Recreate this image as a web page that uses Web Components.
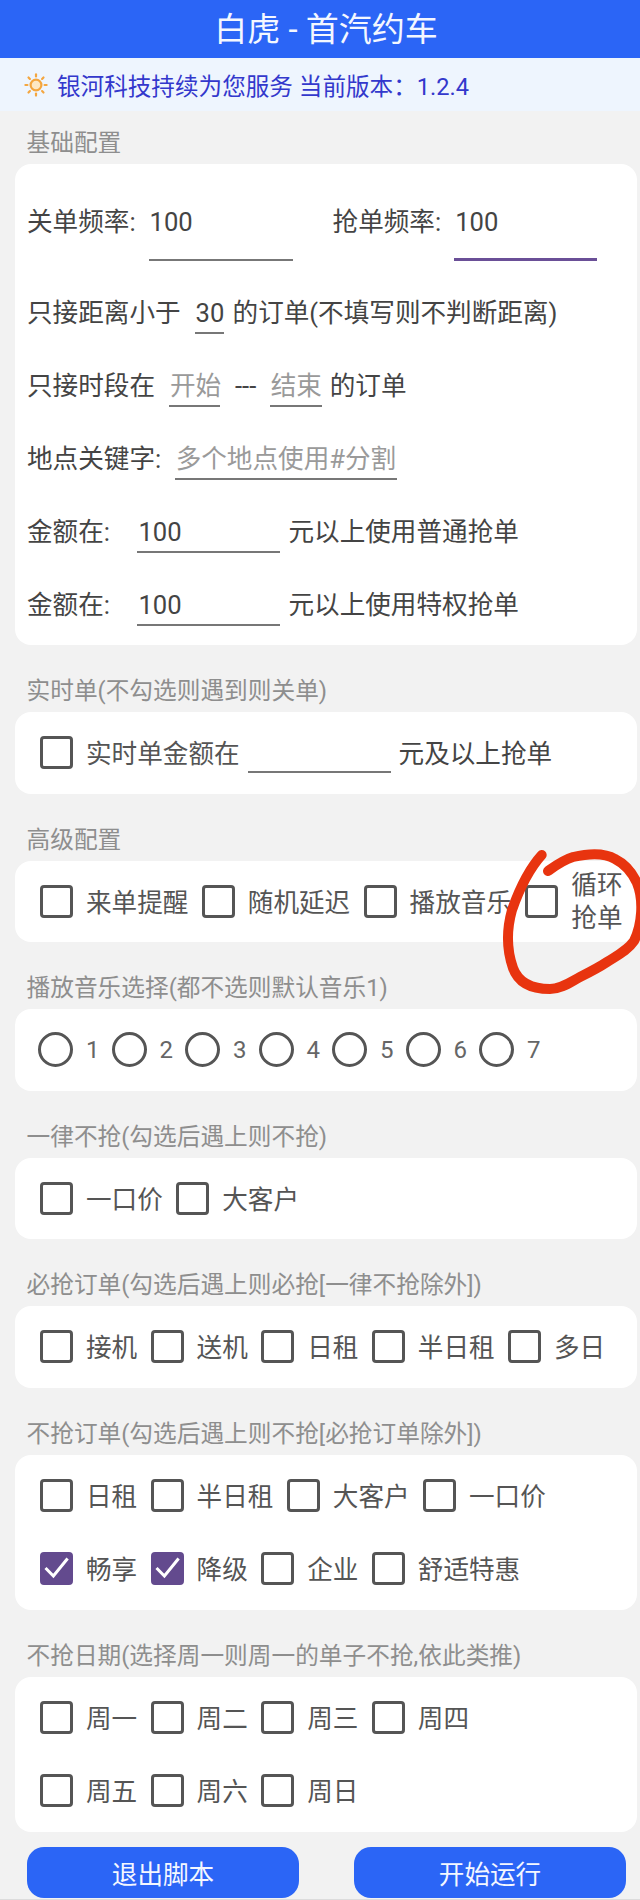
<!DOCTYPE html>
<html lang="zh">
<head>
<meta charset="utf-8">
<title>白虎 - 首汽约车</title>
<style>
    html, body {
        margin: 0;
        padding: 0;
    }

    body {
        position: relative;
        width: 640px;
        height: 1900px;
        overflow: hidden;
        background: #f2f2f2;
        box-shadow: inset 0 -1px #dcdcdc;
        color: #444;
        font-family: Roboto, "Noto Sans CJK SC", sans-serif;
        font-size: 25.6px;
    }
</style>
</head>
<body>
<app-header>白虎 - 首汽约车</app-header>
<app-notice>银河科技持续为您服务 当前版本：1.2.4</app-notice>

<config-section label="基础配置" first>
    <form-card class="form">
        <form-row tall>
            关单频率:
            <text-field w="144" ml="13" value="100" tall></text-field>
            <span style="margin-left:40px">抢单频率:</span>
            <text-field w="143" ml="13" value="100" tall active></text-field>
        </form-row>
        <form-row>
            只接距离小于
            <text-field w="29" ml="14" value="30"></text-field>
            <span style="margin-left:9px">的订单(不填写则不判断距离)</span>
        </form-row>
        <form-row>
            只接时段在
            <text-field w="51" ml="14" hint="开始"></text-field>
            <span style="margin-left:15px">---</span>
            <text-field w="52" ml="13.5" hint="结束"></text-field>
            <span style="margin-left:8px">的订单</span>
        </form-row>
        <form-row>
            地点关键字:
            <text-field w="222" ml="13.5" hint="多个地点使用#分割"></text-field>
        </form-row>
        <form-row>
            金额在:
            <text-field w="143" ml="27.5" value="100"></text-field>
            <span style="margin-left:8px">元以上使用普通抢单</span>
        </form-row>
        <form-row>
            金额在:
            <text-field w="143" ml="27.5" value="100"></text-field>
            <span style="margin-left:8px">元以上使用特权抢单</span>
        </form-row>
    </form-card>
</config-section>

<config-section label="实时单(不勾选则遇到则关单)">
    <form-card>
        <option-row>
            <check-box>实时单金额在</check-box>
            <text-field w="143" ml="-5.2"></text-field>
            <span style="margin-left:-5.6px;padding-bottom:2px">元及以上抢单</span>
        </option-row>
    </form-card>
</config-section>

<config-section label="高级配置">
    <form-card>
        <option-row>
            <check-box>来单提醒</check-box>
            <check-box>随机延迟</check-box>
            <check-box>播放音乐</check-box>
            <check-box wrap>循环抢单</check-box>
        </option-row>
    </form-card>
</config-section>

<config-section label="播放音乐选择(都不选则默认音乐1)">
    <form-card>
        <option-row radios>
            <radio-box>1</radio-box>
            <radio-box>2</radio-box>
            <radio-box>3</radio-box>
            <radio-box>4</radio-box>
            <radio-box>5</radio-box>
            <radio-box>6</radio-box>
            <radio-box>7</radio-box>
        </option-row>
    </form-card>
</config-section>

<config-section label="一律不抢(勾选后遇上则不抢)">
    <form-card>
        <option-row>
            <check-box>一口价</check-box>
            <check-box>大客户</check-box>
        </option-row>
    </form-card>
</config-section>

<config-section label="必抢订单(勾选后遇上则必抢[一律不抢除外])">
    <form-card>
        <option-row>
            <check-box>接机</check-box>
            <check-box>送机</check-box>
            <check-box>日租</check-box>
            <check-box>半日租</check-box>
            <check-box>多日</check-box>
        </option-row>
    </form-card>
</config-section>

<config-section label="不抢订单(勾选后遇上则不抢[必抢订单除外])">
    <form-card>
        <option-row>
            <check-box>日租</check-box>
            <check-box>半日租</check-box>
            <check-box>大客户</check-box>
            <check-box>一口价</check-box>
        </option-row>
        <option-row>
            <check-box checked>畅享</check-box>
            <check-box checked>降级</check-box>
            <check-box>企业</check-box>
            <check-box>舒适特惠</check-box>
        </option-row>
    </form-card>
</config-section>

<config-section label="不抢日期(选择周一则周一的单子不抢,依此类推)">
    <form-card>
        <option-row>
            <check-box>周一</check-box>
            <check-box>周二</check-box>
            <check-box>周三</check-box>
            <check-box>周四</check-box>
        </option-row>
        <option-row>
            <check-box>周五</check-box>
            <check-box>周六</check-box>
            <check-box>周日</check-box>
        </option-row>
    </form-card>
</config-section>

<action-bar>
    <action-button>退出脚本</action-button>
    <action-button>开始运行</action-button>
</action-bar>

<pen-circle></pen-circle>

<script>
// small helper, every element here is just a style block plus some markup
function shadow(el, html) {
    el.attachShadow({ mode: 'open' }).innerHTML = html;
}

class AppHeader extends HTMLElement {
    connectedCallback() {
        shadow(this, `
            <style>
                :host {
                    display: flex;
                    align-items: center;
                    justify-content: center;
                    height: 58px;
                    padding: 0 0 5px 12px;
                    box-sizing: border-box;
                    background: #2b65f6;
                    color: #f4f7ff;
                    font-size: 33px;
                }
            </style>
            <slot></slot>
        `);
    }
}

class AppNotice extends HTMLElement {
    connectedCallback() {
        const rays = [0, 45, 90, 135, 180, 225, 270, 315]
            .map((a) => `<line x1="12" y1="1.4" x2="12" y2="3.4" transform="rotate(${a} 12 12)"/>`)
            .join('');
        shadow(this, `
            <style>
                :host {
                    display: flex;
                    align-items: center;
                    height: 53px;
                    padding-left: 24px;
                    box-sizing: border-box;
                    background: #eef5fe;
                    color: #3338cc;
                    font-size: 23.6px;
                }

                svg {
                    width: 24px;
                    height: 24px;
                    margin-right: 9px;
                    flex: none;
                }
            </style>
            <svg viewBox="0 0 24 24" fill="#fde8c4" stroke="#f4a63f" stroke-width="2.2" stroke-linecap="round">
                <circle cx="12" cy="12" r="5.4"/>
                ${rays}
            </svg>
            <span><slot></slot></span>
        `);
    }
}

class ConfigSection extends HTMLElement {
    connectedCallback() {
        const top = this.hasAttribute('first') ? 11 : 25;
        shadow(this, `
            <style>
                :host {
                    display: block;
                    padding-top: ${top}px;
                }

                .label {
                    height: 42px;
                    line-height: 42px;
                    padding-left: 26.5px;
                    color: #8e8e8e;
                    font-size: 23.7px;
                }
            </style>
            <div class="label">${this.getAttribute('label')}</div>
            <slot></slot>
        `);
    }
}

class FormCard extends HTMLElement {
    connectedCallback() {
        const form = this.classList.contains('form');
        shadow(this, `
            <style>
                :host {
                    display: flex;
                    flex-direction: column;
                    gap: ${form ? '33px' : '0'};
                    margin: 0 3px 0 15px;
                    padding: ${form ? '20px 0 19px 12px' : '4px 0'};
                    background: #fff;
                    border-radius: 16px;
                }
            </style>
            <slot></slot>
        `);
    }
}

class FormRow extends HTMLElement {
    connectedCallback() {
        const tall = this.hasAttribute('tall');
        // text sits a bit above the middle of the field, underline stays at the bottom
        shadow(this, `
            <style>
                :host {
                    display: flex;
                    align-items: flex-start;
                    height: ${tall ? 77 : 40}px;
                    line-height: ${tall ? 77 : 38}px;
                    white-space: nowrap;
                }
            </style>
            <slot></slot>
        `);
    }
}

class OptionRow extends HTMLElement {
    connectedCallback() {
        const radios = this.hasAttribute('radios');
        shadow(this, `
            <style>
                :host {
                    display: flex;
                    align-items: center;
                    gap: ${radios ? '12px' : '13.4px'};
                    height: 73.5px;
                    padding-left: ${radios ? '23px' : '25px'};
                    white-space: nowrap;
                }
            </style>
            <slot></slot>
        `);
    }
}

class TextField extends HTMLElement {
    connectedCallback() {
        const value = this.getAttribute('value');
        const hint = this.getAttribute('hint');
        const active = this.hasAttribute('active');
        shadow(this, `
            <style>
                :host {
                    display: block;
                    flex: none;
                    box-sizing: border-box;
                    width: ${this.getAttribute('w')}px;
                    height: ${this.hasAttribute('tall') ? '77px' : '40px'};
                    margin-left: ${this.getAttribute('ml')}px;
                    padding-left: 1px;
                    border-bottom: ${active ? '3px solid #6a4f97' : '2px solid #777'};
                    color: ${value ? '#444' : '#9a9a9a'};
                }
            </style>
            <span>${value || hint || ''}</span>
        `);
    }
}

class CheckBox extends HTMLElement {
    connectedCallback() {
        const checked = this.hasAttribute('checked');
        const wrap = this.hasAttribute('wrap');
        shadow(this, `
            <style>
                :host {
                    display: flex;
                    align-items: center;
                    flex: none;
                    gap: 13px;
                    color: #555;
                }

                .box {
                    width: 33px;
                    height: 33px;
                    box-sizing: border-box;
                    border: 3px solid #555;
                    border-radius: 4px;
                    flex: none;
                }

                .on {
                    border-color: #634a8e;
                    background: #634a8e;
                }

                svg {
                    display: block;
                    width: 33px;
                    height: 33px;
                    margin: -3px;
                }

                .text {
                    ${wrap ? 'width: 52px; white-space: normal; line-height: 33px; padding-top: 2px;' : 'padding-bottom: 2px;'}
                }
            </style>
            <div class="box ${checked ? 'on' : ''}">
                ${checked ? '<svg viewBox="0 0 33 33" fill="none" stroke="#fff" stroke-width="3"><path d="M5.5 16 13.4 24 27.6 6.5"/></svg>' : ''}
            </div>
            <span class="text"><slot></slot></span>
        `);
    }
}

class RadioBox extends HTMLElement {
    connectedCallback() {
        shadow(this, `
            <style>
                :host {
                    display: flex;
                    align-items: center;
                    flex: none;
                    gap: 13px;
                    color: #666;
                    font-size: 24px;
                }

                .ring {
                    width: 35px;
                    height: 35px;
                    box-sizing: border-box;
                    border: 3px solid #555;
                    border-radius: 50%;
                }
            </style>
            <div class="ring"></div>
            <slot></slot>
        `);
    }
}

class ActionBar extends HTMLElement {
    connectedCallback() {
        shadow(this, `
            <style>
                :host {
                    display: flex;
                    justify-content: space-between;
                    margin-top: 15px;
                    padding: 0 14px 0 27px;
                }
            </style>
            <slot></slot>
        `);
    }
}

class ActionButton extends HTMLElement {
    connectedCallback() {
        shadow(this, `
            <style>
                :host {
                    display: flex;
                    align-items: center;
                    justify-content: center;
                    width: 272px;
                    height: 51px;
                    background: #2b65f6;
                    color: #f4f7ff;
                    border-radius: 17px;
                }
            </style>
            <slot></slot>
        `);
    }
}

// the red marker scribble lying over the last option
class PenCircle extends HTMLElement {
    connectedCallback() {
        shadow(this, `
            <style>
                :host {
                    position: absolute;
                    left: 0;
                    top: 0;
                    pointer-events: none;
                }

                svg {
                    display: block;
                }
            </style>
            <svg width="640" height="1900" fill="none" stroke="#e8340f" stroke-width="10" stroke-linecap="round" stroke-linejoin="round">
                <path d="M541.7 855C530 868 519 890 512 910C507 928 506 948 513 968C518 982 530 989 550 989C562 989 572 981 580 977C590 972 598 968 607 962C618 955 628 950 634 941C642 925 644 900 637 883C632 872 625 864 615 859C605 853 590 853 573 857C563 860 555 866 548 871"/>
            </svg>
        `);
    }
}

customElements.define('app-header', AppHeader);
customElements.define('app-notice', AppNotice);
customElements.define('config-section', ConfigSection);
customElements.define('form-card', FormCard);
customElements.define('form-row', FormRow);
customElements.define('option-row', OptionRow);
customElements.define('text-field', TextField);
customElements.define('check-box', CheckBox);
customElements.define('radio-box', RadioBox);
customElements.define('action-bar', ActionBar);
customElements.define('action-button', ActionButton);
customElements.define('pen-circle', PenCircle);
</script>
</body>
</html>
